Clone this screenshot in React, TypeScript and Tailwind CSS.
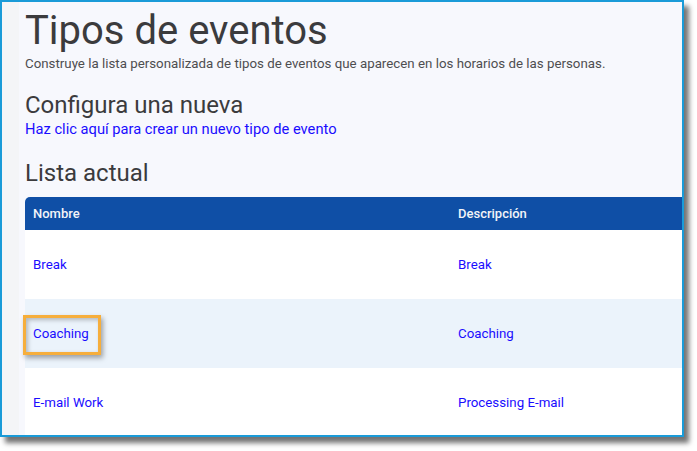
import React from 'react'

const rows = [
  { name: 'Break', desc: 'Break' },
  { name: 'Coaching', desc: 'Coaching', highlight: true },
  { name: 'E-mail Work', desc: 'Processing E-mail' },
]

export default function App() {
  return (
    <div className="w-[697px] h-[451px] bg-white overflow-hidden" style={{ fontFamily: 'Roboto, "Noto Sans", sans-serif' }}>
      <div className="w-[684px] h-[437px] border-2 border-[#1a9bd8] shadow-[5px_6px_5px_rgba(0,0,0,0.55)] flex overflow-hidden">
        <div className="w-[17px] shrink-0 bg-[#f4f5f7]" />
        <div className="flex-1 bg-[#f7f8fd] pl-[6px] overflow-hidden">
          <h1 className="text-[40px] leading-[40px] text-[#3b3b3d] mt-[9px]">Tipos de eventos</h1>
          <p className="text-[13.3px] leading-[15px] text-[#4e4e50] mt-[5px]">
            Construye la lista personalizada de tipos de eventos que aparecen en los horarios de las personas.
          </p>
          <h2 className="text-[24px] leading-[28px] text-[#3b3b3d] mt-[20px]">Configura una nueva</h2>
          <a className="block text-[14.7px] leading-[18px] text-[#1a0dff] mt-[1px]">Haz clic aquí para crear un nuevo tipo de evento</a>
          <h2 className="text-[24px] leading-[28px] text-[#3b3b3d] mt-[21px]">Lista actual</h2>
          <div className="mt-[10px]">
            <div className="grid grid-cols-[433px_1fr] h-[33px] items-center bg-[#0f4fa6] rounded-tl-[5px] text-[13px] font-medium text-[#f2f4f8]">
              <div className="pl-2">Nombre</div>
              <div>Descripción</div>
            </div>
            {rows.map((r, i) => (
              <div
                key={r.name}
                className={`relative grid grid-cols-[433px_1fr] h-[69px] items-center text-[13.3px] text-[#1a0dff] ${
                  i % 2 === 1 ? 'bg-[#ebf3fb]' : 'bg-white'
                }`}
              >
                <div className="pl-2">{r.name}</div>
                <div>{r.desc}</div>
                {r.highlight && (
                  <div className="absolute left-[-2px] top-[16px] w-[78px] h-[40px] border-[3px] border-[#f6ae3c] shadow-[2px_3px_5px_rgba(0,0,0,0.35),inset_2px_2px_4px_rgba(0,0,0,0.25)]" />
                )}
              </div>
            ))}
          </div>
        </div>
      </div>
    </div>
  )
}
